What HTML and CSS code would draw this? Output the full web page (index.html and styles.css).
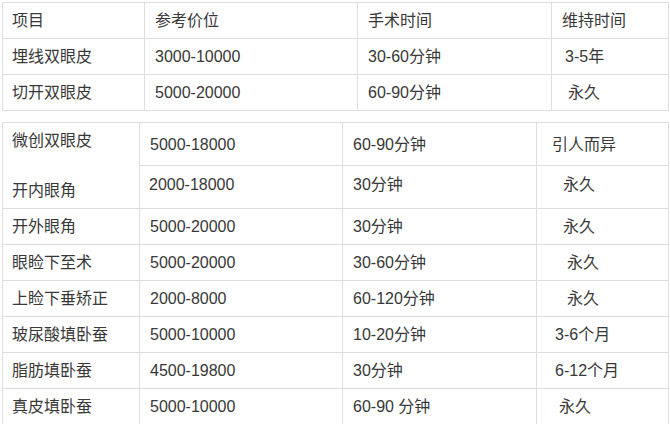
FILE: index.html
```html
<!DOCTYPE html>
<html lang="zh-CN">
<head>
<meta charset="utf-8">
<title>双眼皮价格表</title>
<link rel="stylesheet" href="styles.css">
</head>
<body>
<div class="page">
  <table class="tbl tbl-a">
    <colgroup>
      <col class="a1"><col class="a2"><col class="a3"><col class="a4">
    </colgroup>
    <tr><td>项目</td><td>参考价位</td><td>手术时间</td><td>维持时间</td></tr>
    <tr><td>埋线双眼皮</td><td>3000-10000</td><td>30-60分钟</td><td class="i3">3-5年</td></tr>
    <tr><td>切开双眼皮</td><td>5000-20000</td><td>60-90分钟</td><td class="i6">永久</td></tr>
  </table>

  <table class="tbl tbl-b">
    <colgroup>
      <col class="b1"><col class="b2"><col class="b3"><col class="b4">
    </colgroup>
    <tr class="tall"><td rowspan="2" class="merged">微创双眼皮<br><br>开内眼角</td><td>5000-18000</td><td>60-90分钟</td><td class="last">引人而异</td></tr>
    <tr class="tall"><td class="up">2000-18000</td><td class="up">30分钟</td><td class="last i11 up">永久</td></tr>
    <tr><td>开外眼角</td><td>5000-20000</td><td>30分钟</td><td class="last i11">永久</td></tr>
    <tr><td>眼睑下至术</td><td>5000-20000</td><td>30-60分钟</td><td class="last i15">永久</td></tr>
    <tr><td>上睑下垂矫正</td><td>2000-8000</td><td>60-120分钟</td><td class="last i15">永久</td></tr>
    <tr><td>玻尿酸填卧蚕</td><td>5000-10000</td><td>10-20分钟</td><td class="last i3">3-6个月</td></tr>
    <tr><td>脂肪填卧蚕</td><td>4500-19800</td><td>30分钟</td><td class="last i3">6-12个月</td></tr>
    <tr><td>真皮填卧蚕</td><td>5000-10000</td><td>60-90 分钟</td><td class="last i7">永久</td></tr>
  </table>
</div>
</body>
</html>
```

FILE: styles.css
```css
html, body {
  margin: 0;
  padding: 0;
  background: #ffffff;
}

.page {
  padding: 2px 2px 0 2px;
  font-family: "Liberation Sans", "Noto Sans CJK SC", sans-serif;
  font-size: 16px;
  color: #383838;
}

.tbl {
  border-collapse: collapse;
  table-layout: fixed;
  width: 666px;
}

.tbl td {
  border: 1px solid #dedede;
  padding: 0 0 0 10px;
  vertical-align: middle;
  line-height: 25px;
  white-space: nowrap;
}

.tbl-a tr { height: 36px; }
.tbl-a td:first-child { padding-left: 9px; }

.a1 { width: 142px; }
.a2 { width: 213px; }
.a3 { width: 194px; }
.a4 { width: 117px; }

.tbl-b {
  margin-top: 11px;
}
.tbl-b tr { height: 36px; }
.tbl-b tr.tall { height: 43px; }
.tbl-b td:first-child { padding-left: 9px; }
.tbl-b td.last { padding-left: 15px; }

.b1 { width: 137px; }
.b2 { width: 203px; }
.b3 { width: 194px; }
.b4 { width: 132px; }

.tbl-b td.merged { vertical-align: middle; }
.tbl-b td.up { padding-bottom: 6px; }

.i3 { text-indent: 3px; }
.i6 { text-indent: 6px; }
.i7 { text-indent: 7px; }
.i11 { text-indent: 11px; }
.i15 { text-indent: 15px; }
```
